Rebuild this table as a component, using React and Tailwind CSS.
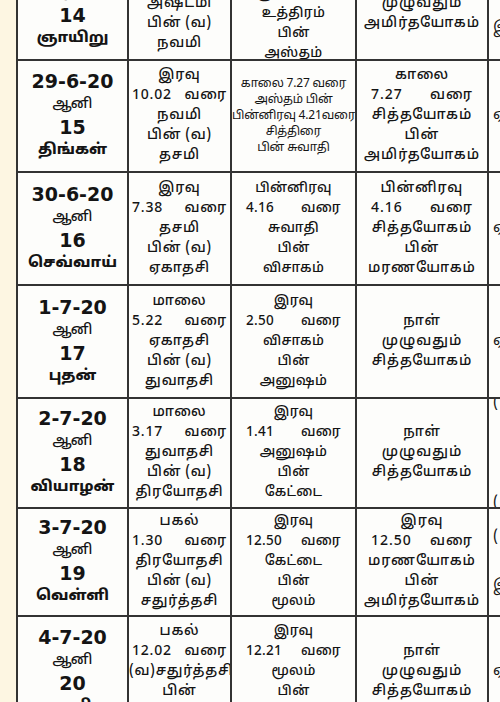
import React from "react";

const rows = [
  {
    h: "h-[112px]",
    date: "28-6-20",
    day: "14",
    week: "ஞாயிறு",
    thithi: ["இரவு", ["11.56", "வரை"], "அஷ்டமி", ["பின்", "(வ)"], "நவமி"],
    star: ["பகல்", "2.09 வரை", "பூரம் பின்", "உத்திரம்", "பின்", "அஸ்தம்"],
    yogam: ["நாள்", "முழுவதும்", "அமிர்தயோகம்"],
    last: ["", "இ"],
  },
  {
    h: "h-[112px]",
    date: "29-6-20",
    day: "15",
    week: "திங்கள்",
    thithi: ["இரவு", ["10.02", "வரை"], "நவமி", ["பின்", "(வ)"], "தசமி"],
    star: ["காலை 7.27 வரை", "அஸ்தம் பின்", "பின்னிரவு 4.21வரை", "சித்திரை", "பின் சுவாதி"],
    small: true,
    yogam: ["காலை", ["7.27", "வரை"], "சித்தயோகம்", "பின்", "அமிர்தயோகம்"],
    last: ["ஏ"],
  },
  {
    h: "h-[113px]",
    date: "30-6-20",
    day: "16",
    week: "செவ்வாய்",
    thithi: ["இரவு", ["7.38", "வரை"], "தசமி", ["பின்", "(வ)"], "ஏகாதசி"],
    star: ["பின்னிரவு", ["4.16", "வரை"], "சுவாதி", "பின்", "விசாகம்"],
    yogam: ["பின்னிரவு", ["4.16", "வரை"], "சித்தயோகம்", "பின்", "மரணயோகம்"],
    last: ["ஏ"],
  },
  {
    h: "h-[113px]",
    date: "1-7-20",
    day: "17",
    week: "புதன்",
    thithi: ["மாலை", ["5.22", "வரை"], "ஏகாதசி", ["பின்", "(வ)"], "துவாதசி"],
    star: ["இரவு", ["2.50", "வரை"], "விசாகம்", "பின்", "அனுஷம்"],
    yogam: ["நாள்", "முழுவதும்", "சித்தயோகம்"],
    last: ["ஏ"],
  },
  {
    h: "h-[110px]",
    date: "2-7-20",
    day: "18",
    week: "வியாழன்",
    thithi: ["மாலை", ["3.17", "வரை"], "துவாதசி", ["பின்", "(வ)"], "திரயோதசி"],
    star: ["இரவு", ["1.41", "வரை"], "அனுஷம்", "பின்", "கேட்டை"],
    yogam: ["நாள்", "முழுவதும்", "சித்தயோகம்"],
    last: ["(", "", "("],
  },
  {
    h: "h-[108px]",
    date: "3-7-20",
    day: "19",
    week: "வெள்ளி",
    thithi: ["பகல்", ["1.30", "வரை"], "திரயோதசி", ["பின்", "(வ)"], "சதுர்த்தசி"],
    star: ["இரவு", ["12.50", "வரை"], "கேட்டை", "பின்", "மூலம்"],
    yogam: ["இரவு", ["12.50", "வரை"], "மரணயோகம்", "பின்", "அமிர்தயோகம்"],
    last: ["(", "இ"],
  },
  {
    h: "h-[112px]",
    date: "4-7-20",
    day: "20",
    week: "சனி",
    thithi: ["பகல்", ["12.02", "வரை"], "(வ)சதுர்த்தசி", "பின்", "பௌர்ணமி"],
    star: ["இரவு", ["12.21", "வரை"], "மூலம்", "பின்", "பூராடம்"],
    yogam: ["நாள்", "முழுவதும்", "சித்தயோகம்"],
    last: ["ஏ"],
  },
];

const tamil = "font-['Noto_Sans_Tamil','Lohit_Tamil','Latha','Noto_Sans',sans-serif]";

// pad: spread of "number ... வரை" pairs inside the cell
function Line({ item, pad }) {
  if (Array.isArray(item)) {
    return (
      <div className={"flex justify-between " + (item[0] === "பின்" ? "px-[18px]" : pad)}>
        <span>{item[0]}</span>
        <span>{item[1]}</span>
      </div>
    );
  }
  return <div className="text-center whitespace-nowrap">{item}</div>;
}

function Cell({ lines, small, pad, size }) {
  return (
    <div
      className={
        "flex flex-col justify-center overflow-hidden border-r-2 border-[#333] " +
        (small ? "text-[12px] leading-[16px] tracking-[-0.2px]" : size)
      }
    >
      {lines.map((l, i) => (
        <Line key={i} item={l} pad={pad} />
      ))}
    </div>
  );
}

export default function App() {
  return (
    <div className={"w-[500px] h-[702px] overflow-hidden flex bg-[#fdfdfb] text-[#141414] " + tamil}>
      <div className="w-[16px] shrink-0 bg-[#fdf6e2]" />
      <div className="flex-1 border-l-2 border-[#333] -mt-[51px]">
        {rows.map((r, i) => (
          <div
            key={i}
            className={"grid grid-cols-[111px_103px_125px_132px_1fr] border-b-2 border-[#333] " + r.h}
          >
            <div className="flex flex-col justify-center items-center border-r-2 border-[#333] leading-[23px]">
              <div className="font-['DejaVu_Sans',sans-serif] font-bold text-[19px]">{r.date}</div>
              <div className="text-[14px] font-medium">ஆனி</div>
              <div className="font-['DejaVu_Sans',sans-serif] font-bold text-[19px]">{r.day}</div>
              <div className="font-extrabold text-[15px]">{r.week}</div>
            </div>
            <Cell lines={r.thithi} pad="px-[3px]" size="text-[14px] leading-[20px] tracking-[0.8px] font-medium" />
            <Cell lines={r.star} small={r.small} pad="px-[14px]" size="text-[13.5px] leading-[20px] tracking-[0.3px] font-medium" />
            <Cell lines={r.yogam} pad="px-[14px]" size="text-[14px] leading-[20px] tracking-[1px] font-medium" />
            <div className="flex flex-col justify-center pl-[4px] text-[15px] leading-[50px] overflow-hidden">
              {r.last.map((l, j) => (
                <div key={j}>{l || "\u00a0"}</div>
              ))}
            </div>
          </div>
        ))}
      </div>
    </div>
  );
}
